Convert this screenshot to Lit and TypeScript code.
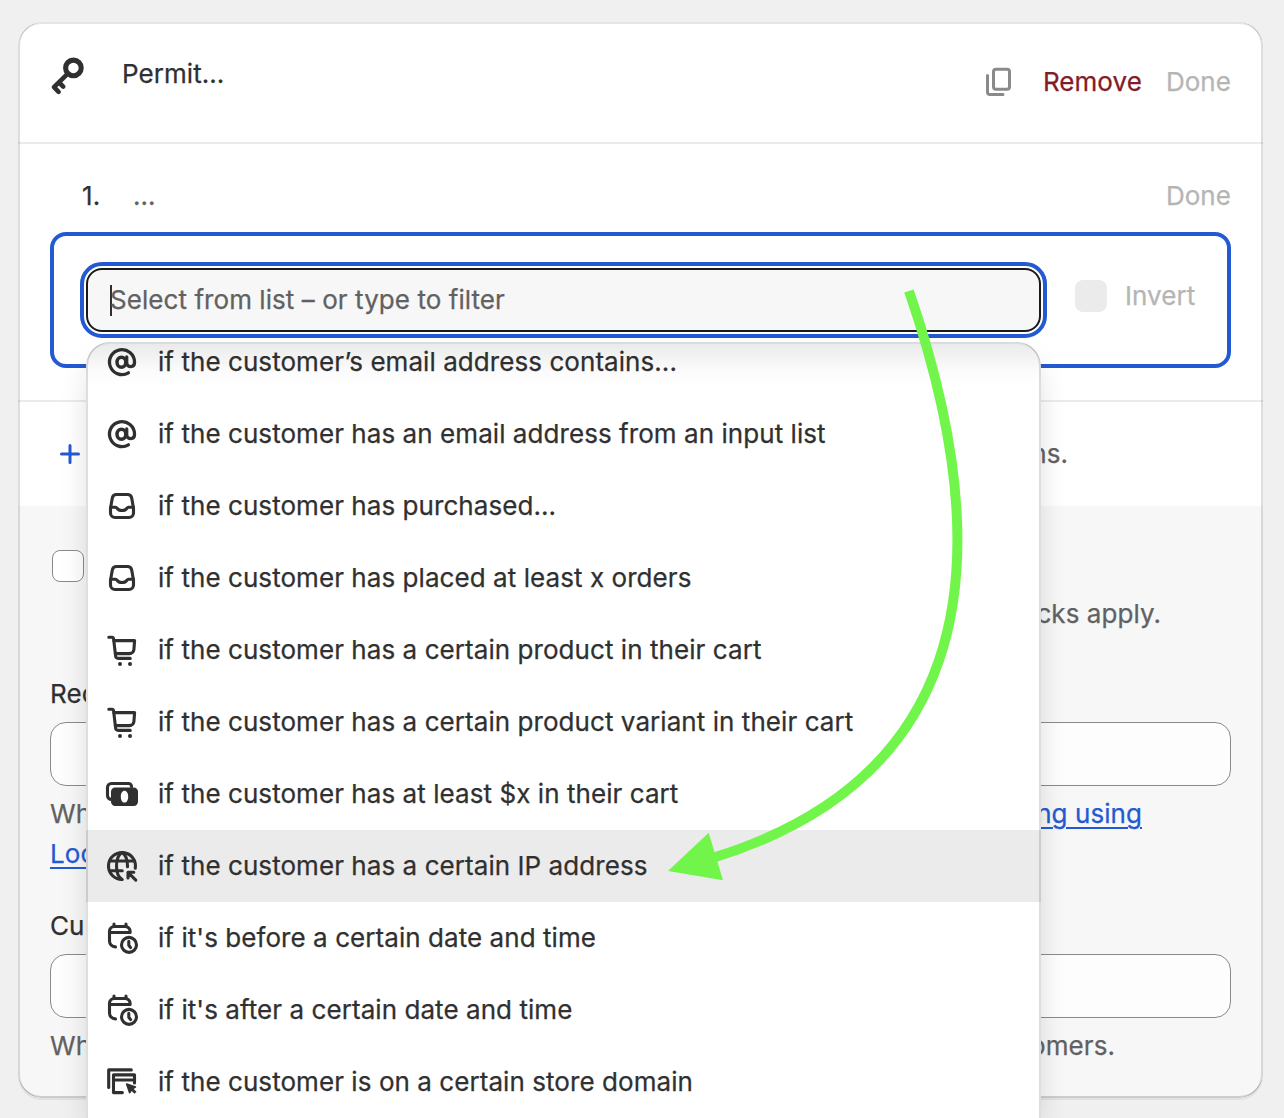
import { LitElement, html, svg, css } from "lit";
import { customElement, property } from "lit/decorators.js";

const glyphs: Record<string, unknown> = {
  mention: svg`<ellipse cx="9.7" cy="10.1" rx="2.2" ry="2.5" stroke-width="1.75"/><path d="M13.2 15.4a6.25 6.25 0 1 1 3.05-5.4v.4c0 1.1-.7 1.9-1.8 1.9-1.2 0-2.1-.7-2.1-1.8v-3" stroke-width="1.65"/>`,
  order: svg`<path d="M7.3 4.25h5.4a2.2 2.2 0 0 1 2.17 1.85l.75 4.3c.05.3.13.6.13.9v2.2a2.25 2.25 0 0 1-2.25 2.25h-7a2.25 2.25 0 0 1-2.25-2.25v-2.2c0-.3.08-.6.13-.9l.75-4.3a2.2 2.2 0 0 1 2.17-1.85z"/><path d="M4.3 10.6h2.4c.45 0 .65.2.9.55.45.7 1.2 1.1 2.4 1.1s1.95-.4 2.4-1.1c.25-.35.45-.55.9-.55h2.4"/>`,
  cart: svg`<path d="M3.4 3.6h1.5a.9.9 0 0 1 .9.8l1 8.6a1.3 1.3 0 0 0 1.3 1.2h6"/><path d="M6 5.3h10.3l-.35 4.5a2.2 2.2 0 0 1-2.2 2h-6.9"/><g class="solid"><circle cx="9" cy="17" r="1"/><circle cx="14" cy="17" r="1"/></g>`,
  cash: svg`<path d="M14.75 6.3v-.05a1.5 1.5 0 0 0-1.5-1.5h-8.5a2 2 0 0 0-2 2v4a2 2 0 0 0 2 2"/><path class="solid" fill-rule="evenodd" d="M6.6 6.7h9.3a2.1 2.1 0 0 1 2.1 2.1v5.1a2.1 2.1 0 0 1-2.1 2.1h-9.3a2.1 2.1 0 0 1-2.1-2.1v-5.1a2.1 2.1 0 0 1 2.1-2.1zM11.25 8.4c-1.1 0-1.85 1.3-1.85 2.95s.75 2.95 1.85 2.95 1.85-1.3 1.85-2.95-.75-2.95-1.85-2.95z"/>`,
  globe: svg`<path d="M10 16.75a6.75 6.75 0 1 1 6.65-5.6"/><path d="M10 16.75c-1.6-1-2.75-3.6-2.75-6.75s1.15-5.75 2.75-6.75c1.6 1 2.75 3.6 2.75 6.75v.4"/><path d="M3.9 7.5h12.2M3.9 12.4h6.2M13 13.2l3.9 3.9M13 16v-2.9h2.9"/>`,
  time: svg`<path d="M6 3v1.2M12 3v1.2M3.75 7.25h10.3v-.5a2.5 2.5 0 0 0-2.5-2.5h-5.3a2.5 2.5 0 0 0-2.5 2.5v4.8a2.9 2.9 0 0 0 2.9 2.9h.1"/><circle cx="13.5" cy="13.45" r="3.75"/><path d="M13.4 11.7v1.9l.9 1.2"/>`,
  domain: svg`<path d="M3.35 12.7v-8.75h11.3M10.2 15.3h-4.45v-8.85h10.5v4M5.75 9h10.5"/><path class="solid" d="M12.5 10.6l4.3 1.5c.4.15.4.6.05.8l-1 .6 1.4 1.4-1 1-1.4-1.4-.6 1c-.2.35-.65.3-.8-.05l-1.5-4.3c-.1-.4.2-.65.55-.55z"/>`,
};

const options = [
  { icon: "mention", text: "if the customer’s email address contains..." },
  { icon: "mention", text: "if the customer has an email address from an input list" },
  { icon: "order", text: "if the customer has purchased..." },
  { icon: "order", text: "if the customer has placed at least x orders" },
  { icon: "cart", text: "if the customer has a certain product in their cart" },
  { icon: "cart", text: "if the customer has a certain product variant in their cart" },
  { icon: "cash", text: "if the customer has at least $x in their cart" },
  { icon: "globe", text: "if the customer has a certain IP address", active: true },
  { icon: "time", text: "if it's before a certain date and time" },
  { icon: "time", text: "if it's after a certain date and time" },
  { icon: "domain", text: "if the customer is on a certain store domain" },
];

@customElement("rule-icon")
class RuleIcon extends LitElement {
  @property() name = "";

  static styles = css`
    :host { display: block; width: 40px; height: 40px; flex: none; }
    svg { display: block; width: 40px; height: 40px; fill: none; stroke: #303030; stroke-width: 1.55; stroke-linecap: round; stroke-linejoin: round; }
    .solid { fill: #303030; stroke: none; }
  `;

  render() {
    return html`<svg viewBox="0 0 20 20">${glyphs[this.name]}</svg>`;
  }
}

@customElement("condition-menu")
class ConditionMenu extends LitElement {
  static styles = css`
    :host { display: block; height: 776px; overflow: hidden; background: #fff; border-radius: 24px 24px 0 0; position: relative; }
    .list { margin-top: -16px; }
    .option { display: flex; align-items: center; height: 72px; padding-left: 16px; gap: 16px; }
    .active { background: #ebebeb; }
    .fade { position: absolute; inset: 0 0 auto; height: 44px; background: linear-gradient(rgba(0, 0, 0, 0.085), rgba(0, 0, 0, 0.02) 60%, transparent); }
    .edge { position: absolute; inset: 0; border-radius: 24px 24px 0 0; box-shadow: inset 2px 0 rgba(0, 0, 0, 0.13), inset -2px 0 rgba(0, 0, 0, 0.13), inset 0 2px rgba(204, 204, 204, 0.5); }
  `;

  render() {
    return html`
      <div class="list">
        ${options.map((o) => html`
          <div class="option ${o.active ? "active" : ""}">
            <rule-icon name=${o.icon}></rule-icon><span>${o.text}</span>
          </div>`)}
      </div>
      <div class="fade"></div>
      <div class="edge"></div>
    `;
  }
}

@customElement("app-root")
class AppRoot extends LitElement {
  static styles = css`
    :host { display: block; position: relative; box-sizing: border-box; width: 1284px; height: 1118px; overflow: hidden; padding: 22px 21px 0 18px; background: #f0f0f0; color: #303030; font: 400 26px/40px Inter, sans-serif; letter-spacing: 0.06px; -webkit-text-stroke-width: 0.25px; }
    * { box-sizing: border-box; }
    .card { position: relative; height: 1076px; border-radius: 24px; overflow: hidden; background: #fff; display: flex; flex-direction: column; }
    .shade { border-radius: 24px; box-shadow: 0 2px rgba(26, 26, 26, 0.07); }
    .bevel { position: absolute; inset: 0; border-radius: 24px; box-shadow: inset 2px 0 rgba(0, 0, 0, 0.13), inset -2px 0 rgba(0, 0, 0, 0.13), inset 0 -2px rgba(0, 0, 0, 0.17), inset 0 2px rgba(204, 204, 204, 0.5); }
    .head { display: flex; height: 122px; padding: 32px 32px 0; border-bottom: 2px solid #ebebeb; }
    .key { width: 40px; height: 44px; margin-left: -2px; }
    .title { margin-left: 34px; flex: 1; }
    .tools { display: flex; align-items: center; height: 40px; margin-top: 8px; }
    .copy { width: 32px; height: 34px; margin-right: 27px; }
    .remove { color: #821c26; margin-right: 24px; }
    .muted { color: #b5b5b5; }
    .rule { height: 258px; padding: 32px 32px 0; border-bottom: 2px solid #ebebeb; }
    .line { display: flex; height: 40px; padding-left: 32px; }
    .dots { color: #616161; flex: 1; margin-left: 33px; }
    .num { width: 18px; }
    .editor { display: flex; align-items: center; height: 136px; margin-top: 16px; border: 4px solid #245ad1; border-radius: 16px; padding: 0 32px; }
    .combo { display: flex; align-items: center; width: 955px; flex: none; height: 64px; border: 2px solid #1a1a1a; border-radius: 16px; background: #f7f7f7; outline: 4px solid #245ad1; outline-offset: 2px; padding-left: 22px; color: #616161; }
    .caret { width: 2px; height: 31px; margin-right: -2px; background: #303030; }
    .invert { display: flex; gap: 18px; margin: -8px 0 0 34px; align-items: center; }
    .box { width: 32px; height: 32px; border-radius: 8px; background: #ebebeb; }
    .add { display: flex; align-items: center; justify-content: space-between; height: 104px; padding: 0 195px 0 42px; color: #616161; }
    .plus { width: 20px; height: 20px; }
    .settings { flex: 1; background: #f7f7f7; padding: 44px 32px 0; }
    .check { display: flex; justify-content: space-between; padding: 0 70px 0 2px; height: 124px; }
    .check .box { background: #fff; border: 1px solid #8a8a8a; }
    .check .sub { margin-top: 44px; }
    .sub { color: #616161; }
    .label { height: 48px; }
    .next { margin-top: 32px; }
    .field { height: 64px; border: 1px solid #8a8a8a; border-radius: 16px; background: #fdfdfd; margin-bottom: 8px; }
    .help { display: flex; justify-content: space-between; color: #616161; }
    .help.one { padding-right: 89px; }
    .help.two { padding-right: 116px; }
    .link { color: #245ad1; text-decoration: underline; text-decoration-thickness: 2px; text-underline-offset: 4px; }
    .veil { position: absolute; left: 86px; top: 342px; width: 955px; height: 776px; border-radius: 24px 24px 0 0; box-shadow: 0 16px 32px -8px rgba(26, 26, 26, 0.22); }
    .arrow { position: absolute; left: 0; top: 0; width: 1284px; height: 1118px; }
  `;

  render() {
    return html`
      <div class="shade">
        <div class="card">
          <div class="head">
            <svg class="key" viewBox="48 54 40 44" fill="none" stroke="#303030" stroke-linejoin="round">
              <circle cx="73.4" cy="67.9" r="7.8" stroke-width="5.1"/>
              <path d="M67.8 73.6L54 87.2L58.6 91.8M59.6 83L63.2 86.6" stroke-width="4.6" stroke-linecap="round"/>
            </svg>
            <div class="title">Permit...</div>
            <div class="tools">
              <svg class="copy" viewBox="984 65 32 34" fill="none" stroke="#8a8a8a" stroke-width="3" stroke-linecap="round">
                <rect x="993.5" y="69.2" width="16" height="20" rx="2.5"/>
                <path d="M987.5 75.5v16.500a2.500 2.500 0 0 0 2.500 2.500h13"/>
              </svg>
              <span class="remove">Remove</span><span class="muted">Done</span>
            </div>
          </div>
          <div class="rule">
            <div class="line"><span class="num">1.</span><span class="dots">...</span><span class="muted">Done</span></div>
            <div class="editor">
              <div class="combo"><i class="caret"></i>Select from list – or type to filter</div>
              <div class="invert muted"><i class="box"></i>Invert</div>
            </div>
          </div>
          <div class="add">
            <svg class="plus" viewBox="0 0 20 20" stroke="#245ad1" stroke-width="3" stroke-linecap="round"><path d="M10 1.500v17M1.500 10h17"/></svg>
            <span>ns.</span>
          </div>
          <div class="settings">
            <div class="check"><i class="box"></i><span class="sub">cks apply.</span></div>
            <div class="label">Rec</div>
            <div class="field"></div>
            <div class="help one"><span>Wh</span><span class="link">ng using</span></div>
            <div><span class="link">Loc</span></div>
            <div class="label next">Cu</div>
            <div class="field"></div>
            <div class="help two"><span>Wh</span><span>omers.</span></div>
          </div>
          <div class="bevel"></div>
        </div>
      </div>
      <div class="veil"><condition-menu></condition-menu></div>
      <svg class="arrow" viewBox="0 0 1284 1118">
        <path d="M909 291Q1066 748 714 857.500" fill="none" stroke="#72f54a" stroke-width="10"/>
        <path d="M668 871L708.700 832.700L723 880.300Z" fill="#72f54a"/>
      </svg>
    `;
  }
}
